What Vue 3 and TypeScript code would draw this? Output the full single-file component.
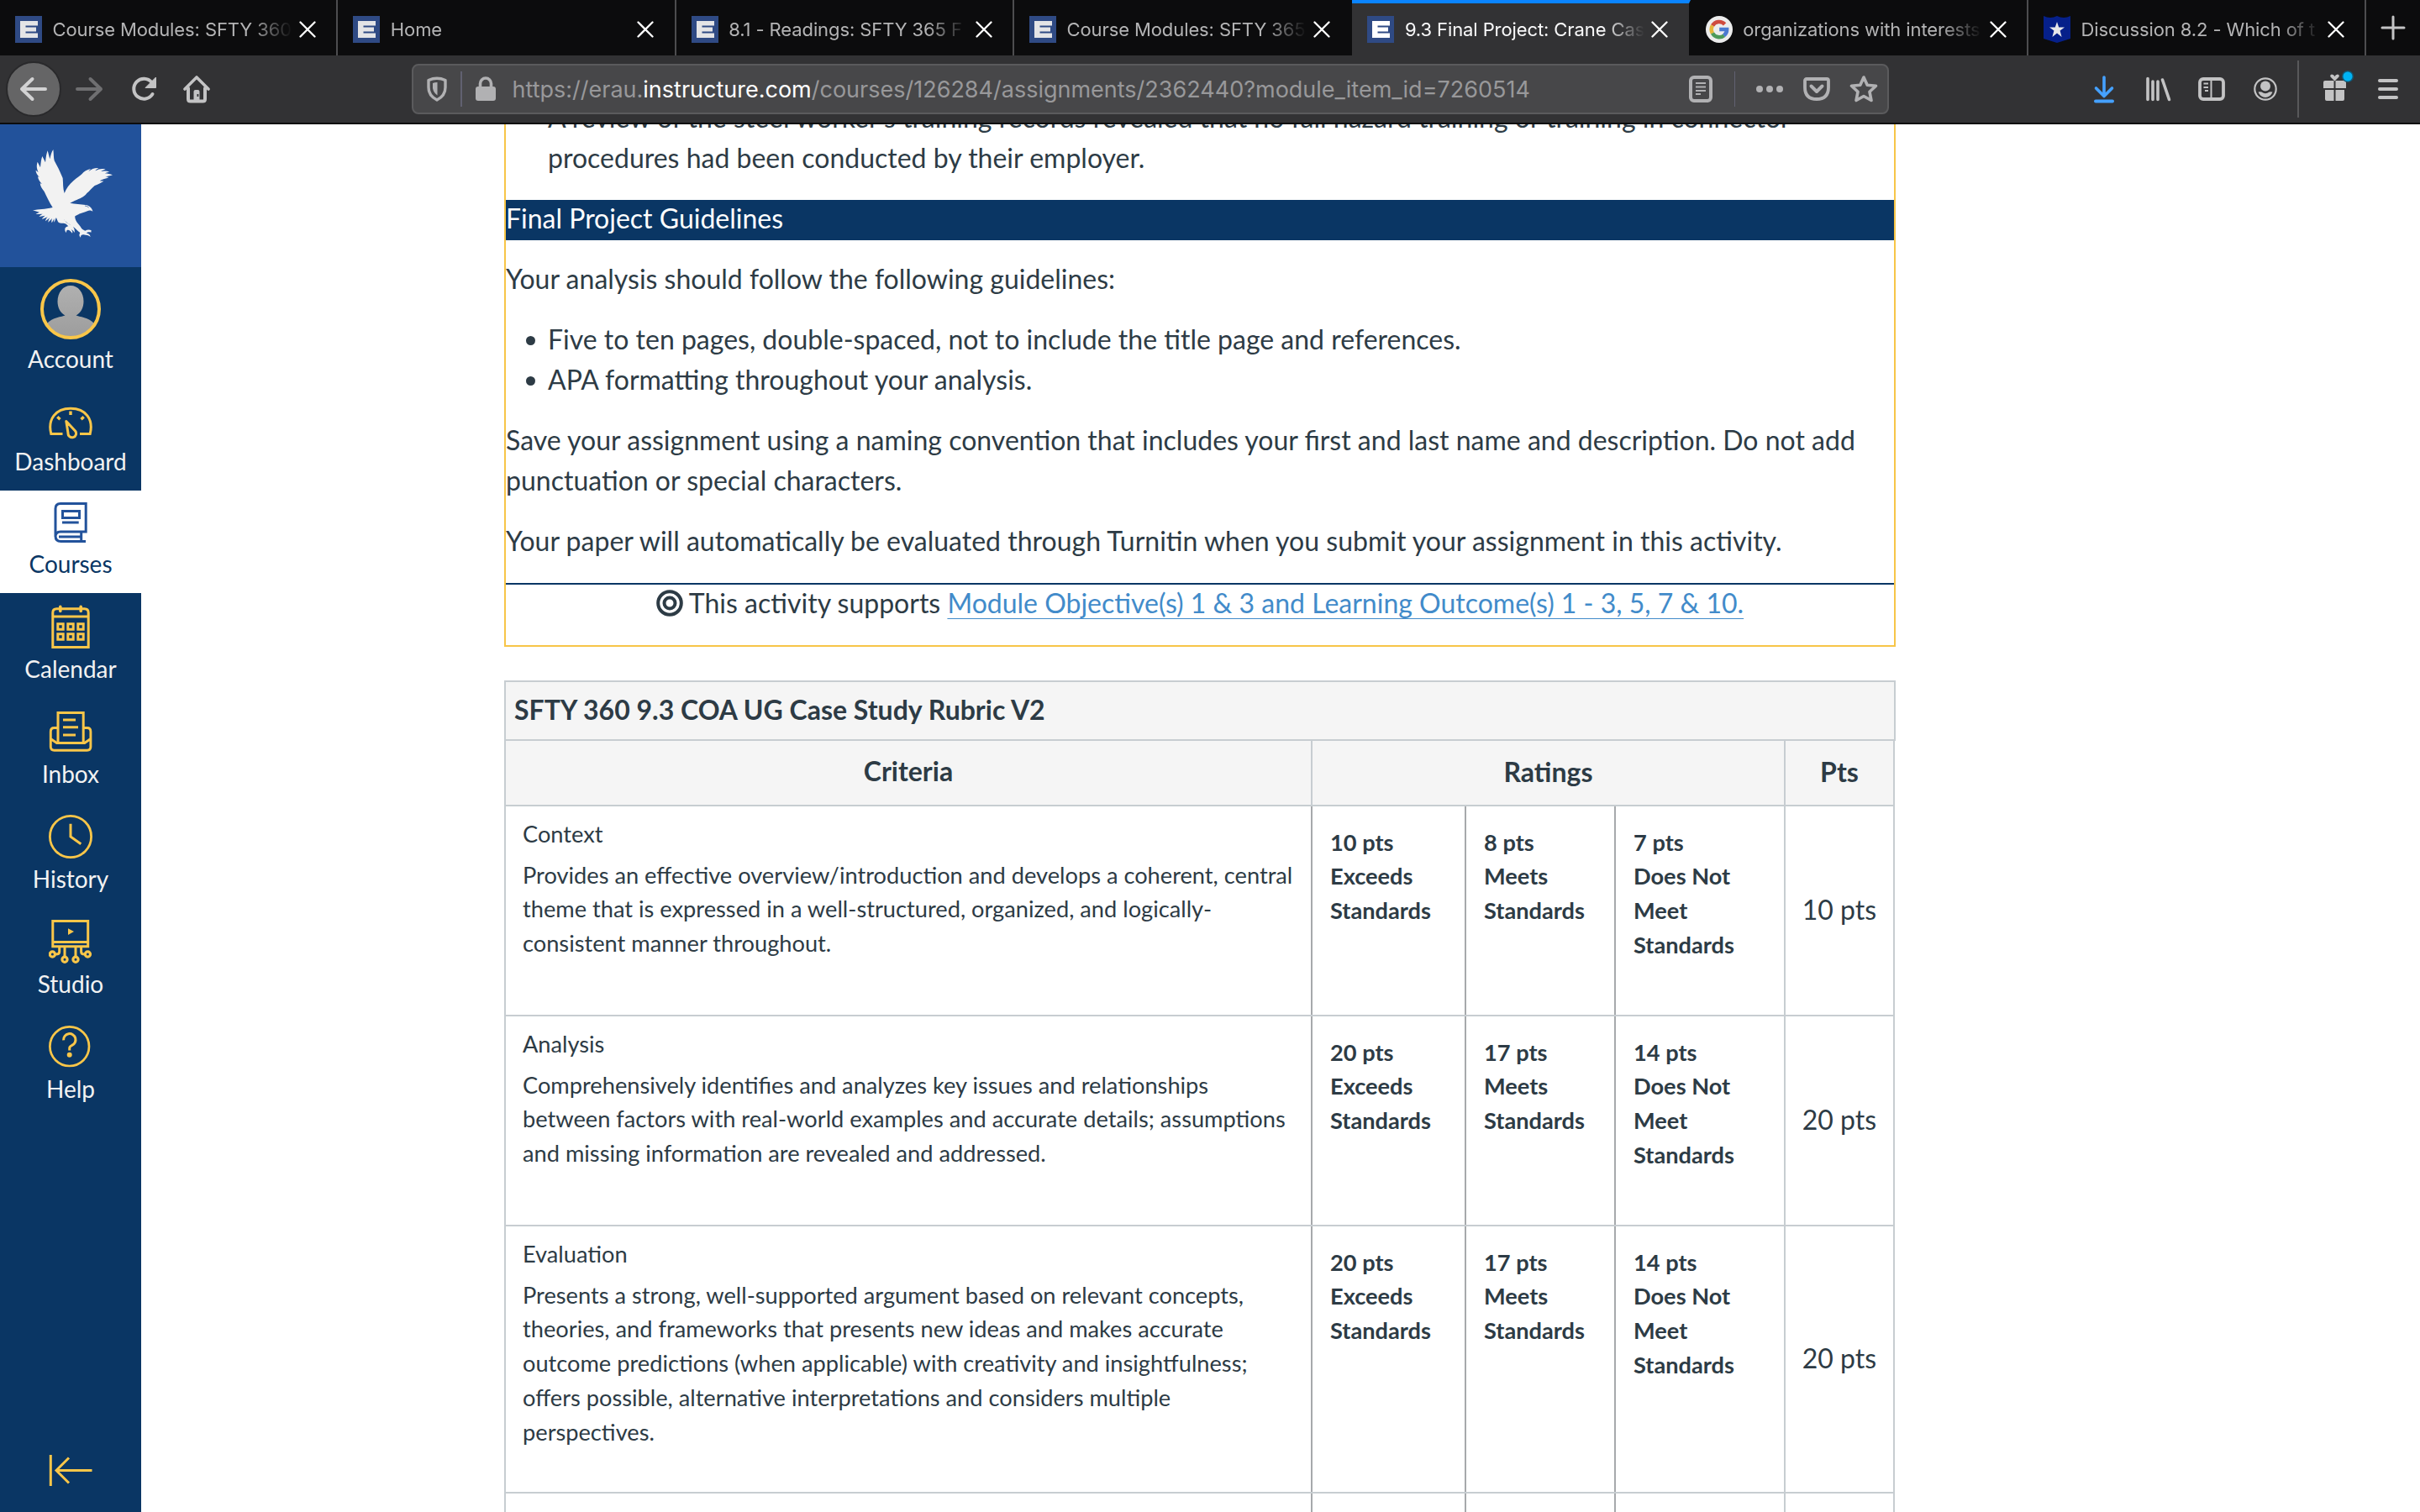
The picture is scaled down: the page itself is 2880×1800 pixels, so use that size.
<script setup lang="ts">
interface Tab { title: string; icon: 'erau' | 'google' | 'star'; active?: boolean }
interface Rating { pts: string; label: string }
interface Criterion { name: string; text: string[]; ratings: Rating[]; pts: string; height: number }

const tabs: Tab[] = [
  { title: 'Course Modules: SFTY 360', icon: 'erau' },
  { title: 'Home', icon: 'erau' },
  { title: '8.1 - Readings: SFTY 365 F', icon: 'erau' },
  { title: 'Course Modules: SFTY 365', icon: 'erau' },
  { title: '9.3 Final Project: Crane Cas', icon: 'erau', active: true },
  { title: 'organizations with interests', icon: 'google' },
  { title: 'Discussion 8.2 - Which of t', icon: 'star' },
]

const levels = ['Exceeds Standards', 'Meets Standards', 'Does Not Meet Standards']
const rate = (...p: number[]): Rating[] => p.map((n, i) => ({ pts: `${n} pts`, label: levels[i] }))

const criteria: Criterion[] = [
  {
    name: 'Context',
    text: [
      'Provides an effective overview/introduction and develops a coherent, central',
      'theme that is expressed in a well-structured, organized, and logically-',
      'consistent manner throughout.',
    ],
    ratings: rate(10, 8, 7),
    pts: '10 pts',
    height: 250,
  },
  {
    name: 'Analysis',
    text: [
      'Comprehensively identifies and analyzes key issues and relationships',
      'between factors with real-world examples and accurate details; assumptions',
      'and missing information are revealed and addressed.',
    ],
    ratings: rate(20, 17, 14),
    pts: '20 pts',
    height: 250,
  },
  {
    name: 'Evaluation',
    text: [
      'Presents a strong, well-supported argument based on relevant concepts,',
      'theories, and frameworks that presents new ideas and makes accurate',
      'outcome predictions (when applicable) with creativity and insightfulness;',
      'offers possible, alternative interpretations and considers multiple',
      'perspectives.',
    ],
    ratings: rate(20, 17, 14),
    pts: '20 pts',
    height: 318,
  },
]
</script>

<template>
  <div class="screen">
    <header class="tabs">
      <div v-for="(t, i) in tabs" :key="i" class="tab" :class="{ active: t.active, plain: i === 3 }">
        <svg v-if="t.icon === 'erau'" class="fav" viewBox="0 0 32 32">
          <rect width="32" height="32" fill="#2f4a84" />
          <path d="M6 6H27V11.5H12.5V13.5H25V18.5H12.5V20.5H27V26H6Z" :fill="t.active ? '#fff' : '#e4e4e6'" />
        </svg>
        <svg v-else-if="t.icon === 'google'" class="fav" viewBox="0 0 32 32">
          <circle cx="16" cy="16" r="16" fill="#ececec" />
          <g fill="none" stroke-width="4.6">
            <path d="M22.6 9.8A9.2 9.2 0 0 0 8 11.5" stroke="#cf4a3e" />
            <path d="M8 11.4A9.2 9.2 0 0 0 8 20.6" stroke="#e5b53a" />
            <path d="M8 20.5A9.2 9.2 0 0 0 21.8 23.2" stroke="#4c9a5a" />
            <path d="M21.6 23.3A9.2 9.2 0 0 0 25.1 16H16.2" stroke="#4a79d1" />
          </g>
        </svg>
        <svg v-else class="fav" viewBox="0 0 32 32">
          <path d="M0 0Q8 4 16 0Q24 4 32 0V27L16 32L0 27Z" fill="#06208a" />
          <path d="M16 7L18.2 13.4H25L19.6 17.5L21.6 25L16 20.6L10.4 25L12.4 17.5L7 13.4H13.8Z" fill="#e8e8ea" />
        </svg>
        <span class="title">{{ t.title }}</span>
        <svg class="close" viewBox="0 0 20 20"><path d="M1.5 1.5L18.5 18.5M18.5 1.5L1.5 18.5" stroke="#fff" stroke-width="2.3" stroke-linecap="round" /></svg>
      </div>
      <div class="newtab">
        <svg width="30" height="30" viewBox="0 0 30 30"><path d="M15 2V28M2 15H28" stroke="#c4c4c5" stroke-width="3" stroke-linecap="round" /></svg>
      </div>
    </header>

    <div class="toolbar">
      <div class="nav-left">
        <div class="back">
          <svg width="34" height="32" viewBox="0 0 34 32"><path d="M31 16H3M15.500 4L3 16L15.500 28" fill="none" stroke="#d2d2d3" stroke-width="4" stroke-linecap="round" stroke-linejoin="round" /></svg>
        </div>
        <svg class="fwd" width="34" height="32" viewBox="0 0 34 32"><path d="M3 16H31M18.500 4L31 16L18.500 28" fill="none" stroke="#6f6f71" stroke-width="4" stroke-linecap="round" stroke-linejoin="round" /></svg>
        <svg class="reload" width="32" height="32" viewBox="0 0 32 32"><path d="M25.500 8A12 12 0 1 0 26.500 22" fill="none" stroke="#c3c3c4" stroke-width="4" stroke-linecap="round" /><path d="M30.500 2V14.500H18Z" fill="#c3c3c4" stroke="#c3c3c4" stroke-linejoin="round" /></svg>
        <svg class="home" width="32" height="34" viewBox="0 0 32 34"><g fill="none" stroke="#c3c3c4" stroke-linecap="round" stroke-linejoin="round"><path d="M2 17L16 3L30 17" stroke-width="3.600" /><path d="M6 16V29Q6 31.500 8.500 31.500H23.500Q26 31.500 26 29V16" stroke-width="4" /></g><path d="M12.500 31V20Q12.500 18 14.500 18H17.500Q19.500 18 19.500 20V31Z" fill="#c3c3c4" /><rect x="16.500" y="23" width="1.800" height="3" fill="#323234" /></svg>
      </div>

      <div class="urlbar">
        <svg class="shield" width="24" height="30" viewBox="0 0 24 30"><path d="M2 4.500Q12 0 22 4.500V13Q22 23 12 28Q2 23 2 13Z" fill="none" stroke="#b1b1b3" stroke-width="3.400" stroke-linejoin="round" /><path d="M12.500 7Q9 7 7 8V14Q8 19.500 12.500 22.500Z" fill="#b1b1b3" /></svg>
        <i class="vline" />
        <svg class="lock" width="26" height="30" viewBox="0 0 26 30"><path d="M6.500 14V8.500A6.500 6.500 0 0 1 19.500 8.500V14" fill="none" stroke="#b1b1b3" stroke-width="3.600" /><rect x="1" y="12" width="24" height="17" rx="3" fill="#b1b1b3" /></svg>
        <span class="url">https://erau.<b>instructure.com</b>/courses/126284/assignments/2362440?module_item_id=7260514</span>
        <svg class="reader" width="28" height="32" viewBox="0 0 28 32"><rect x="2" y="2" width="24" height="28" rx="4" fill="none" stroke="#b1b1b3" stroke-width="4" /><path d="M8 9H20M8 13.500H20M8 18H20M8 22H14" stroke="#b1b1b3" stroke-width="2" /></svg>
        <i class="vline second" />
        <svg class="dots" width="34" height="10" viewBox="0 0 34 10"><g fill="#b1b1b3"><circle cx="5" cy="5" r="4" /><circle cx="17" cy="5" r="4" /><circle cx="29" cy="5" r="4" /></g></svg>
        <svg class="pocket" width="32" height="28" viewBox="0 0 32 28"><path d="M4 2H28Q30 2 30 4V12Q30 26 16 26Q2 26 2 12V4Q2 2 4 2Z" fill="none" stroke="#b1b1b3" stroke-width="3.800" /><path d="M9.500 10.500L16 17L22.500 10.500" fill="none" stroke="#b1b1b3" stroke-width="4" stroke-linecap="round" stroke-linejoin="round" /></svg>
        <svg class="star" width="34" height="34" viewBox="0 0 34 34"><path d="M17 3L21.200 12.200L31.500 13.300L24 20.300L26 30.500L17 25.500L8 30.500L10 20.300L2.500 13.300L12.800 12.200Z" fill="none" stroke="#b1b1b3" stroke-width="3.600" stroke-linejoin="round" /></svg>
      </div>

      <div class="nav-right">
        <svg class="dl" width="26" height="34" viewBox="0 0 26 34"><path d="M13 3V25M3.500 16L13 25.500L22.500 16" fill="none" stroke="#45a1ff" stroke-width="3.600" stroke-linecap="round" stroke-linejoin="round" /><rect x="1" y="29.500" width="24" height="4" rx="2" fill="#45a1ff" /></svg>
        <svg class="lib" width="32" height="30" viewBox="0 0 32 30"><path d="M3 2.500V27.500M9 6V27.500M15 6V27.500M20.500 4L28.500 27.500" stroke="#c3c3c4" stroke-width="3.600" stroke-linecap="round" /></svg>
        <svg class="side" width="32" height="28" viewBox="0 0 32 28"><rect x="2" y="2" width="28" height="24" rx="4" fill="none" stroke="#c3c3c4" stroke-width="3.800" /><path d="M15.500 3V25" stroke="#c3c3c4" stroke-width="2" /><path d="M6.500 7.500H12M6.500 12H12M8 16H12" stroke="#c3c3c4" stroke-width="2" /></svg>
        <svg class="acct" width="28" height="28" viewBox="0 0 28 28"><circle cx="14" cy="14" r="12.700" fill="none" stroke="#c3c3c4" stroke-width="2.200" /><circle cx="14" cy="10.500" r="6" fill="#c3c3c4" /><path d="M5.500 17.500Q8 17 9.500 17.500Q14 21 18.500 17.500Q20 17 22.500 17.500Q20 24 14 24Q8 24 5.500 17.500Z" fill="#c3c3c4" /></svg>
        <i class="tall" />
        <svg class="gift" width="38" height="38" viewBox="0 0 38 38"><g fill="#c3c3c4"><path d="M2 14Q2 12 4 12H14.500V21H2ZM16.500 12H27Q29 12 29 14V21H16.500Z" /><path d="M4 23H14.500V36H6Q4 36 4 34ZM16.500 23H27V34Q27 36 25 36H16.500Z" /><path d="M15.500 12.500L10.500 7.500Q9.500 5 12 4.500Q14.500 4.500 15.500 7Q16.500 4.500 19 4.500Q21.500 5 20.500 7.500Z" /></g><circle cx="31" cy="7" r="7" fill="#125a78" /><circle cx="31" cy="7" r="5.500" fill="#00b3f4" /></svg>
        <svg class="menu" width="26" height="26" viewBox="0 0 26 26"><path d="M3 3H23M3 13H23M3 23H23" stroke="#c3c3c4" stroke-width="4" stroke-linecap="round" /></svg>
      </div>
    </div>

    <div class="page">
      <nav class="rail">
        <div class="logo">
          <svg viewBox="0 24 504 510" fill="#f2f2f2">
            <path d="M190 114C192 128 191 142 194 154C204 172 214 192 224 216C226 236 224 252 230 270C236 254 248 238 262 226C276 214 286 208 292 202C300 192 310 186 324 183C320 187 317 190 316 192C326 184 338 179 352 180C346 184 342 187 340 190C352 183 364 181 377 184C370 187 364 190 361 192C371 189 382 190 391 194C384 195 377 197 374 199C384 199 394 202 402 205C392 208 384 210 376 211C382 212 386 213 388 214C378 218 366 221 356 226C362 227 366 227 370 227C360 234 348 238 338 243C328 252 320 262 310 270C300 284 284 290 268 296L250 305C266 308 290 309 306 312C318 314 329 322 331 335C325 331 318 331 312 334C296 340 282 343 268 352C266 366 278 378 286 388C290 396 296 402 304 404C312 400 320 400 326 403L325 410C318 407 312 409 308 412C315 414 322 418 323 426C316 420 308 420 298 418C291 418 288 421 288 428C282 424 282 417 286 411C280 407 276 403 272 399C266 393 258 388 250 382C240 376 232 370 228 362C232 372 244 380 254 384C262 389 268 397 266 411C262 405 259 401 254 400C258 404 260 408 258 413C253 406 247 400 241 401C237 403 237 406 237 411C231 407 231 400 233 394C236 390 240 389 244 388L236 380C226 374 218 380 210 375C204 370 204 360 200 358L194 374C192 368 193 364 194 360L185 376C183 370 184 366 186 360L172 374C173 366 175 362 178 358L162 370C163 363 166 359 170 355L150 363C152 357 156 354 161 350L139 354C142 350 147 347 152 344L128 345C132 341 136 340 141 338L117 331C138 327 160 328 188 321C176 302 166 282 158 264C150 254 144 246 143 234L150 238C142 228 136 220 135 210L141 214C132 204 127 196 128 188L137 196C130 180 130 170 134 158L144 178C146 160 147 148 151 138L162 160C164 140 166 128 170 118L178 148C182 132 184 122 190 114Z" />
            <path d="M303 315Q312 316 317 321" fill="none" stroke="#22529b" stroke-width="2" />
          </svg>
        </div>
        <div class="item account">
          <svg class="avatar" width="72" height="72" viewBox="0 0 72 72"><defs><clipPath id="av"><circle cx="36" cy="36" r="33" /></clipPath><linearGradient id="ag" x1="0" y1="0" x2="0" y2="1"><stop offset="0" stop-color="#b0b0b0" /><stop offset="1" stop-color="#9c9c9c" /></linearGradient></defs><g clip-path="url(#av)" fill="url(#ag)"><path d="M36 8C45 8 51.500 16 51.500 27C51.500 34 48 41 42.500 43.500C46 45 58 46 64 53V72H8V53C14 46 26 45 29.500 43.500C24 41 20.500 34 20.500 27C20.500 16 27 8 36 8Z" /></g><circle cx="36" cy="36" r="34" fill="none" stroke="#f9c649" stroke-width="4" /></svg>
          <span>Account</span>
        </div>
        <div class="item dash">
          <svg class="ico" viewBox="0 0 52 52"><path d="M16.500 40.500H2.800C-1.500 23 8 10.200 26 10.200S53.500 23 49.200 40.500H37" /><path d="M26 13.500V18M10.300 20.300L13.500 23.300M41.700 20.300L38.500 23.300" stroke-width="3.400" /><path d="M20.800 25.500L31.500 37A4.800 4.800 0 1 1 23 39.500Z" stroke-linejoin="round" /></svg>
          <span>Dashboard</span>
        </div>
        <div class="item courses">
          <svg class="ico" viewBox="0 0 52 52"><path d="M44.200 1.500V35H14Q8 35 8 41V7.500Q8 1.500 14 1.500ZM8 40Q8 46.600 14.500 46.600H44M12 41H38.700M38.700 36V46" /><rect x="16.500" y="10.500" width="20" height="8" /><path d="M16 24H35.700" /></svg>
          <span>Courses</span>
        </div>
        <div class="item">
          <svg class="ico" viewBox="0 0 52 52"><path d="M4.800 50.500V9.500Q4.800 4.700 9.500 4.700H42.500Q47.200 4.700 47.200 9.500V50.500ZM4.800 14H47.200" /><path d="M13.800 2.200V7.500M38.200 2.200V7.500" stroke-width="3.600" stroke-linecap="round" /><path d="M10.800 22.800H17.200V29.200H10.800ZM22.800 22.800H29.200V29.200H22.800ZM34.800 22.800H41.200V29.200H34.800ZM10.800 34.800H17.200V41.200H10.800ZM22.800 34.800H29.200V41.200H22.800ZM34.800 34.800H41.200V41.200H34.800Z" /></svg>
          <span>Calendar</span>
        </div>
        <div class="item">
          <svg class="ico" viewBox="0 0 52 52"><path d="M11 38.500V3.500H41.200V38.500M17 12H32M17 20.700H35M17 30H32" /><path d="M11 21.500H6.500Q2.300 21.500 2.300 26V44Q2.300 48.200 6.500 48.200H45.700Q49.900 48.200 49.900 44V26Q49.900 21.500 45.700 21.500H41.200M2.300 34.500L9.500 39.500H42.700L49.900 34.500" stroke-width="2.900" /></svg>
          <span>Inbox</span>
        </div>
        <div class="item">
          <svg class="ico" viewBox="0 0 52 52"><circle cx="26" cy="26" r="24.600" stroke-width="2.800" /><path d="M26 10.700V26L38.300 34.700" /></svg>
          <span>History</span>
        </div>
        <div class="item">
          <svg class="ico" viewBox="0 0 52 52"><path d="M4.800 1.500H46.700V31.700H4.800ZM4.800 26.400H46.700M19 32V43.500M32 32V43.500M12.700 32V38Q12.700 41 8.500 41M38.600 32V38Q38.600 41 42.500 41" /><path d="M23 10.300L30 14.100L23 18Z" class="solid" /><g stroke-width="3.200"><circle cx="4.400" cy="41" r="3.100" /><circle cx="19" cy="47.300" r="3.100" /><circle cx="32" cy="47.300" r="3.100" /><circle cx="46.400" cy="41" r="3.100" /></g></svg>
          <span>Studio</span>
        </div>
        <div class="item">
          <svg class="ico" viewBox="0 0 52 52"><circle cx="24.700" cy="25.700" r="23.300" stroke-width="2.700" /><path d="M17.600 18.300A7.200 7.200 0 1 1 27.500 24.500Q24.700 25.800 24.700 28V30.500" /><circle cx="24.700" cy="35.700" r="3" class="solid" /></svg>
          <span>Help</span>
        </div>
        <div class="collapse">
          <svg width="52" height="38" viewBox="0 0 52 38"><path d="M2.300 0V37M51.500 18.500H9M24 3.500L9 18.500L24 33.500" fill="none" stroke="#f9c649" stroke-width="3" /></svg>
        </div>
      </nav>

      <main>
        <section class="doc">
          <p class="indent">A review of the steel worker's training records revealed that no fall hazard training or training in connector<br />procedures had been conducted by their employer.</p>
          <h3>Final Project Guidelines</h3>
          <p>Your analysis should follow the following guidelines:</p>
          <ul>
            <li><i />Five to ten pages, double-spaced, not to include the title page and references.</li>
            <li><i />APA formatting throughout your analysis.</li>
          </ul>
          <p>Save your assignment using a naming convention that includes your first and last name and description. Do not add<br />punctuation or special characters.</p>
          <p>Your paper will automatically be evaluated through Turnitin when you submit your assignment in this activity.</p>
          <div class="support">
            <svg width="32" height="32" viewBox="0 0 32 32"><g fill="none" stroke="#2d3b45"><circle cx="16" cy="16" r="13.800" stroke-width="4" /><circle cx="16" cy="16" r="6.500" stroke-width="4" /></g></svg>
            <span>This activity supports <a>Module Objective(s) 1 &amp; 3 and Learning Outcome(s) 1 - 3, 5, 7 &amp; 10.</a></span>
          </div>
        </section>

        <section class="rubric">
          <div class="caption">SFTY 360 9.3 COA UG Case Study Rubric V2</div>
          <div class="row head">
            <div class="crit">Criteria</div>
            <div class="rats">Ratings</div>
            <div class="pts">Pts</div>
          </div>
          <div v-for="c in criteria" :key="c.name" class="row" :style="{ height: c.height + 'px' }">
            <div class="crit">
              <div class="name">{{ c.name }}</div>
              <div v-for="l in c.text" :key="l" class="line">{{ l }}</div>
            </div>
            <div class="rats">
              <div v-for="(r, i) in c.ratings" :key="i" class="rat" :class="'r' + i">
                <div>{{ r.pts }}</div>
                <div>{{ r.label }}</div>
              </div>
            </div>
            <div class="pts">{{ c.pts }}</div>
          </div>
          <div class="row last">
            <div class="crit" />
            <div class="rats"><div class="rat r0" /><div class="rat r1" /><div class="rat r2" /></div>
            <div class="pts" />
          </div>
        </section>
      </main>
    </div>
  </div>
</template>

<style>
html, body { background: #fff; overflow: hidden; }
</style>

<style scoped>
* { box-sizing: border-box; }
svg { display: block; flex: none; }
.screen { width: 2880px; height: 1800px; overflow: hidden; display: flex; flex-direction: column; background: #fff; font-family: Lato, "Liberation Sans", sans-serif; color: #2d3b45; }

.tabs { height: 66px; flex: none; display: flex; background: #0c0c0d; font: 22px Inter, "Liberation Sans", sans-serif; }
.tab { width: 402.35px; flex: none; display: flex; align-items: center; padding: 3px 26px 0 18px; border-right: 2px solid #4d4d4f; color: #b4b4b5; }
.tab.plain { border-right-color: #0c0c0d; }
.tab.active { background: #323234; color: #f9f9fa; border-right-color: #0c0c0d; border-top: 4px solid #0a84ff; padding-top: 0; }
.fav { width: 32px; height: 32px; margin-right: 12.5px; }
.title { width: 285px; margin-right: 8.5px; flex: none; overflow: hidden; white-space: nowrap; line-height: 30px; letter-spacing: -0.1px; -webkit-mask-image: linear-gradient(to right, #000 235px, transparent 285px); mask-image: linear-gradient(to right, #000 235px, transparent 285px); }
.close { width: 20px; height: 20px; }
.newtab { flex: 1; display: flex; align-items: center; justify-content: center; }

.toolbar { height: 82px; flex: none; display: flex; align-items: center; background: #323234; border-bottom: 2px solid #0c0c0d; }
.nav-left { width: 490px; flex: none; display: flex; align-items: center; padding-left: 7px; }
.back { width: 66px; height: 66px; border-radius: 50%; background: #656566; border: 2px solid #29292b; display: flex; align-items: center; justify-content: center; }
.fwd { margin-left: 16px; }
.reload { margin-left: 32px; }
.home { margin-left: 31px; }
.urlbar { width: 1758px; height: 60px; flex: none; display: flex; align-items: center; background: #474749; border: 2px solid #5b5b5d; border-radius: 8px; padding-left: 16px; }
.vline { width: 1.500px; height: 42px; background: #616171; margin-left: 16px; flex: none; }
.lock { margin-left: 15px; }
.url { margin-left: 19px; padding-top: 2px; width: 1210px; flex: none; white-space: nowrap; font: 27px/36px Inter, "Liberation Sans", sans-serif; color: #98989a; }
.url b { font-weight: 400; color: #fff; }
.reader { margin-left: 190px; }
.vline.second { margin-left: 26px; }
.dots { margin-left: 24px; }
.pocket { margin-left: 23px; }
.star { margin-left: 23px; }
.nav-right { display: flex; align-items: center; padding-left: 243px; }
.lib { margin-left: 36px; }
.side { margin-left: 31px; }
.acct { margin-left: 34px; }
.tall { width: 2px; height: 68px; background: #58585a; margin-left: 24px; }
.gift { margin: -6px 0 0 27px; }
.menu { margin-left: 28px; }

.page { flex: 1; display: flex; min-height: 0; }
.rail { width: 168px; flex: none; display: flex; flex-direction: column; background: #0a3664; }
.logo { height: 170px; flex: none; background: #22529b; }
.logo svg { width: 168px; height: 170px; }
.item { height: 125px; flex: none; display: flex; flex-direction: column; align-items: center; padding-top: 14px; color: #f2f2f2; font-size: 28px; line-height: 34px; }
.item span { margin-top: 7px; }
.ico { width: 52px; height: 52px; fill: none; stroke: #f9c649; stroke-width: 3; }
.solid { fill: #f9c649; stroke: none; }
.item.account { height: 144px; }
.item.account span { margin-top: 6px; }
.item.dash { height: 122px; }
.item.dash span { margin-top: 4px; }
.item.courses { height: 122px; background: #fff; color: #0a3664; }
.item.courses .ico { stroke: #22529b; }
.item.courses span { margin-top: 4px; }
.collapse { margin: auto 0 30px 58px; }

main { flex: 1; min-width: 0; padding-left: 432px; overflow: hidden; }
.doc { display: flow-root; width: 1656px; height: 622px; border: 2px solid #f7c548; border-top: 0; font-size: 32px; line-height: 48px; white-space: nowrap; }
.doc p { margin: 0 0 24px; }
.doc p.indent { margin: -32px 0 26px; padding-left: 50px; }
.doc h3 { margin: 0 0 22px; height: 48px; line-height: 44px; background: #0a3664; color: #fff; font-size: 32px; font-weight: 400; }
.doc ul { list-style: none; margin: 0 0 24px; padding: 0; }
.doc li { display: flex; align-items: center; }
.doc li i { width: 11px; height: 11px; border-radius: 50%; background: #2d3b45; margin: 3px 15px 0 24px; }
.support { display: flex; justify-content: center; margin-top: 26px; border-top: 2px solid #0a3664; }
.support svg { margin: 6px 7px 0 0; }
.support span { line-height: 44px; }
.support a { color: #428bca; text-decoration: underline; text-decoration-thickness: 1px; text-underline-offset: 6px; }

.rubric { width: 1656px; margin-top: 40px; border-left: 2px solid #c7cdd1; }
.caption { height: 72px; border: 2px solid #c7cdd1; border-left: 0; background: #f5f5f5; font-size: 32px; font-weight: 700; line-height: 65px; padding-left: 10px; }
.row { width: 1653px; display: flex; border-bottom: 2px solid #c7cdd1; border-right: 2px solid #c7cdd1; }
.crit { width: 958px; flex: none; padding: 12.5px 0 0 20px; font-size: 27.22px; line-height: 40.8px; white-space: nowrap; }
.name { margin-bottom: 8.400px; }
.rats { width: 563px; flex: none; display: flex; }
.rat { border-left: 2px solid #a6a9ac; padding: 22.5px 20px 0 21px; font-size: 27.2px; line-height: 40.8px; font-weight: 700; }
.r0 { width: 183px; }
.r1 { width: 178px; }
.r2 { width: 202px; }
.pts { flex: 1; border-left: 2px solid #c7cdd1; padding-bottom: 4px; display: flex; align-items: center; justify-content: center; font-size: 32px; white-space: nowrap; }
.head { height: 78px; background: #f5f5f5; font-size: 32px; font-weight: 700; }
.head .crit, .head .rats { padding: 0 0 4px; font-size: 32px; display: flex; align-items: center; justify-content: center; }
.head .rats { border-left: 2px solid #c7cdd1; }
.last { height: 60px; }
</style>
